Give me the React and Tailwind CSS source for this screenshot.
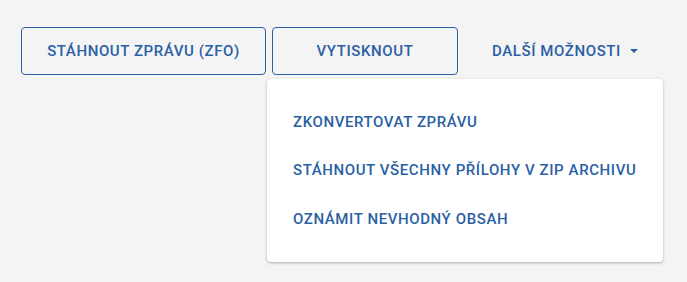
import React from "react";

const blue = "text-[#2a5fa5]";
const label = "text-[15px] font-medium uppercase tracking-[0.6px]";

export default function App() {
  const items = [
    "Zkonvertovat zprávu",
    "Stáhnout všechny přílohy v ZIP archivu",
    "Oznámit nevhodný obsah",
  ];

  return (
    <div
      className="w-[687px] h-[282px] bg-[#f4f4f4] overflow-hidden"
      style={{ fontFamily: "Roboto, 'Noto Sans', sans-serif" }}
    >
      <div className="flex items-center pt-[27px] pl-[21px] gap-[6px]">
        <button
          type="button"
          className={`w-[245px] h-[48px] rounded-[4px] border border-[#2a5fa5] ${blue} ${label}`}
        >
          Stáhnout zprávu (ZFO)
        </button>
        <button
          type="button"
          className={`w-[186px] h-[48px] rounded-[4px] border border-[#2a5fa5] ${blue} ${label}`}
        >
          Vytisknout
        </button>
        <button
          type="button"
          className={`h-[48px] pl-[28px] pr-[20px] flex items-center gap-[9px] ${blue} ${label}`}
        >
          Další možnosti
          <svg width="8" height="4" viewBox="0 0 8 4">
            <path d="M0 0h8L4 4z" fill="#2a5fa5" />
          </svg>
        </button>
      </div>

      {/* dropdown */}
      <div className="relative">
        <div className="absolute left-[267px] top-[4px] w-[396px] bg-white rounded-[4px] shadow-[0_1px_3px_rgba(0,0,0,0.3)] pt-[18.5px] pb-[19px]">
          {items.map((item) => (
            <div
              key={item}
              className={`h-[48.5px] flex items-center pl-[26px] ${blue} ${label}`}
            >
              {item}
            </div>
          ))}
        </div>
      </div>
    </div>
  );
}
